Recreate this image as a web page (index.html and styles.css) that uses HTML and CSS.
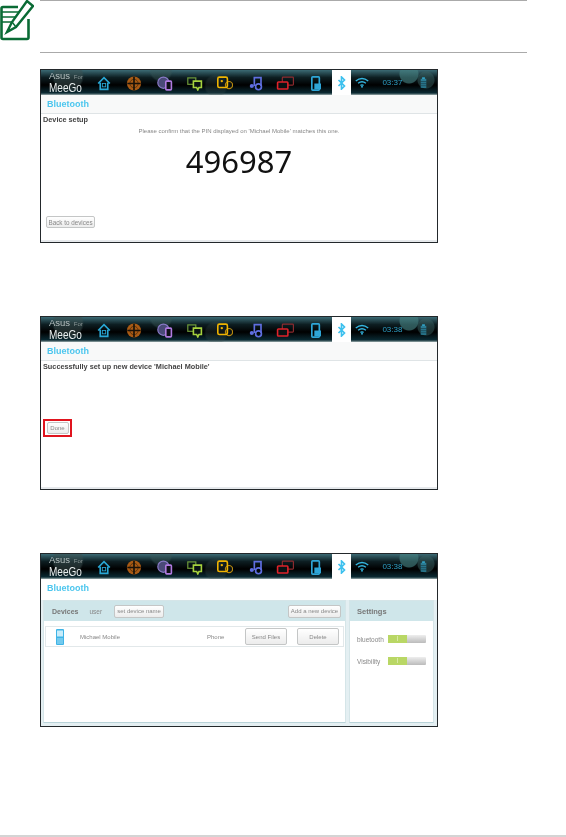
FILE: index.html
```html
<!DOCTYPE html>
<html lang="en">
<head>
    <meta charset="UTF-8">
    <meta name="viewport" content="width=device-width, initial-scale=1.0">
    <title>Bluetooth setup</title>
    <link rel="stylesheet" href="styles.css">
</head>
<body>

    <svg class="defs" width="0" height="0" aria-hidden="true">
        <symbol id="i-home" viewBox="0 0 16 18"><path d="M1 9 8 2l7 7M3.500 8v8h9V8" fill="none" stroke="currentColor" stroke-width="2"/><rect x="6" y="9" width="4" height="4" fill="none" stroke="currentColor"/></symbol>
        <symbol id="i-globe" viewBox="0 0 18 18"><circle cx="9" cy="9" r="8.500" fill="#a85a14"/><path d="M9 1v16M1 9h16" stroke="#1a1208" stroke-width="2"/><circle cx="9" cy="9" r="5" fill="none" stroke="#1a1208" stroke-width=".6"/></symbol>
        <symbol id="i-web" viewBox="0 0 20 18"><circle cx="8" cy="8" r="7" fill="#4a4a78" stroke="#8a7ac8" stroke-width="1.500"/><rect x="11" y="6" width="7" height="11" rx="1" fill="#101018" stroke="#b07ae0" stroke-width="2"/></symbol>
        <symbol id="i-chat" viewBox="0 0 20 18"><rect x="1" y="2" width="10" height="8" fill="none" stroke="#6e9a3a" stroke-width="1.500"/><path d="M8 6h10v8h-3l-1.500 3-1.500-3H8z" fill="#0a1214" stroke="#a6d23e" stroke-width="2"/></symbol>
        <symbol id="i-people" viewBox="0 0 20 18"><circle cx="15" cy="11" r="4.500" fill="#0a1214" stroke="#b88a10" stroke-width="1.500"/><rect x="1" y="1" width="12" height="13" rx="2" fill="none" stroke="#f0b400" stroke-width="2"/><circle cx="6" cy="6" r="1.500" fill="#f0b400"/></symbol>
        <symbol id="i-music" viewBox="0 0 18 18"><path d="M7 12V2h8v10" fill="none" stroke="#5f6ee0" stroke-width="2"/><circle cx="4" cy="12" r="2.500" fill="#5f6ee0"/><circle cx="12" cy="13" r="3.500" fill="none" stroke="#5f6ee0" stroke-width="2"/></symbol>
        <symbol id="i-windows" viewBox="0 0 24 18"><rect x="8" y="1" width="14" height="10" rx="1" fill="none" stroke="#8c2a2e" stroke-width="1.500"/><rect x="2" y="7" width="13" height="9" rx="1" fill="#0a1214" stroke="#e0222a" stroke-width="2"/></symbol>
        <symbol id="i-device" viewBox="0 0 16 18"><rect x="3" y="1" width="9" height="16" rx="1" fill="none" stroke="#2ea6d8" stroke-width="2"/><rect x="6" y="9" width="8" height="7" fill="#2ea6d8"/></symbol>
        <symbol id="i-bt" viewBox="0 0 12 18"><path d="M2 5l8 8-4 4V1l4 4-8 8" fill="none" stroke="currentColor" stroke-width="2.200"/></symbol>
        <symbol id="i-wifi" viewBox="0 0 18 14"><path d="M1 5c5-4 11-4 16 0M4 8c3-2.500 7-2.500 10 0M7 11c1-1 3-1 4 0" fill="none" stroke="currentColor" stroke-width="1.800"/><circle cx="9" cy="12.500" r="1.200" fill="currentColor"/></symbol>
        <symbol id="i-batt" viewBox="0 0 10 16"><rect x="3" y="0" width="4" height="2" fill="currentColor"/><rect x="1" y="2" width="8" height="13" fill="currentColor" opacity=".55"/><path d="M1 6h8M1 9h8M1 12h8" stroke="#0a1214" stroke-width=".6"/></symbol>
    </svg>

    <div class="note">
        <svg class="note-icon" viewBox="0 0 34 42">
            <path d="M18 7H3a1.500 1.500 0 0 0-1.500 1.500v29A1.500 1.500 0 0 0 3 39h24a1.500 1.500 0 0 0 1.500-1.500V19" fill="none" stroke="#0a6b35" stroke-width="2.600"/>
            <path d="M2 12h17M2 17h14M2 22h12" stroke="#0a6b35" stroke-width="1.500"/>
            <path d="M27 1 12 22l-5 10 9-5L33 6z" fill="#fff" stroke="#0a6b35" stroke-width="2.400"/>
            <path d="M12 22l4 5" stroke="#0a6b35" stroke-width="1.500"/>
        </svg>
        <div class="note-body"></div>
    </div>

    <section class="shot shot-first">
        <div class="topbar">
            <div class="logo"><span class="logo-asus">Asus <small>For</small></span><span class="logo-meego">MeeGo</span></div>
            <div class="tabs">
                <svg class="icon ic-home"><use href="#i-home"/></svg>
                <svg class="icon"><use href="#i-globe"/></svg>
                <svg class="icon"><use href="#i-web"/></svg>
                <svg class="icon"><use href="#i-chat"/></svg>
                <svg class="icon"><use href="#i-people"/></svg>
                <svg class="icon"><use href="#i-music"/></svg>
                <svg class="icon icon-wide"><use href="#i-windows"/></svg>
                <svg class="icon"><use href="#i-device"/></svg>
            </div>
            <div class="tab-active"><svg class="icon-bt"><use href="#i-bt"/></svg></div>
            <svg class="icon-wifi"><use href="#i-wifi"/></svg>
            <span class="clock">03:37</span>
            <svg class="icon-batt"><use href="#i-batt"/></svg>
        </div>
        <div class="titlebar">Bluetooth</div>
        <div class="content">
            <h2 class="heading">Device setup</h2>
            <p class="confirm">Please confirm that the PIN displayed on 'Michael Mobile' matches this one.</p>
            <p class="pin">496987</p>
            <button class="btn btn-back">Back to devices</button>
        </div>
    </section>

    <section class="shot shot-second">
        <div class="topbar">
            <div class="logo"><span class="logo-asus">Asus <small>For</small></span><span class="logo-meego">MeeGo</span></div>
            <div class="tabs">
                <svg class="icon ic-home"><use href="#i-home"/></svg>
                <svg class="icon"><use href="#i-globe"/></svg>
                <svg class="icon"><use href="#i-web"/></svg>
                <svg class="icon"><use href="#i-chat"/></svg>
                <svg class="icon"><use href="#i-people"/></svg>
                <svg class="icon"><use href="#i-music"/></svg>
                <svg class="icon icon-wide"><use href="#i-windows"/></svg>
                <svg class="icon"><use href="#i-device"/></svg>
            </div>
            <div class="tab-active"><svg class="icon-bt"><use href="#i-bt"/></svg></div>
            <svg class="icon-wifi"><use href="#i-wifi"/></svg>
            <span class="clock">03:38</span>
            <svg class="icon-batt"><use href="#i-batt"/></svg>
        </div>
        <div class="titlebar">Bluetooth</div>
        <div class="content">
            <h2 class="heading">Successfully set up new device 'Michael Mobile'</h2>
            <div class="highlight"><button class="btn btn-done">Done</button></div>
        </div>
    </section>

    <section class="shot shot-third">
        <div class="topbar">
            <div class="logo"><span class="logo-asus">Asus <small>For</small></span><span class="logo-meego">MeeGo</span></div>
            <div class="tabs">
                <svg class="icon ic-home"><use href="#i-home"/></svg>
                <svg class="icon"><use href="#i-globe"/></svg>
                <svg class="icon"><use href="#i-web"/></svg>
                <svg class="icon"><use href="#i-chat"/></svg>
                <svg class="icon"><use href="#i-people"/></svg>
                <svg class="icon"><use href="#i-music"/></svg>
                <svg class="icon icon-wide"><use href="#i-windows"/></svg>
                <svg class="icon"><use href="#i-device"/></svg>
            </div>
            <div class="tab-active"><svg class="icon-bt"><use href="#i-bt"/></svg></div>
            <svg class="icon-wifi"><use href="#i-wifi"/></svg>
            <span class="clock">03:38</span>
            <svg class="icon-batt"><use href="#i-batt"/></svg>
        </div>
        <div class="titlebar titlebar-plain">Bluetooth</div>
        <div class="panels">
            <div class="panel panel-devices">
                <div class="panel-head">
                    <strong>Devices</strong>
                    <span class="user">user</span>
                    <button class="btn btn-name">set device name</button>
                    <button class="btn btn-add">Add a new device</button>
                </div>
                <div class="device">
                    <svg class="phone" viewBox="0 0 8 16">
                        <rect width="8" height="16" rx="1" fill="#3fb4e6"/>
                        <rect x="1" y="1.500" width="6" height="6" fill="#c8ecfa"/>
                        <path d="M1 10h6M1 12h6M1 14h6" stroke="#a8e0f6"/>
                    </svg>
                    <span class="device-name">Michael Mobile</span>
                    <span class="device-type">Phone</span>
                    <button class="btn btn-row">Send Files</button>
                    <button class="btn btn-row">Delete</button>
                </div>
            </div>
            <div class="panel panel-settings">
                <div class="panel-head"><strong>Settings</strong></div>
                <div class="setting">
                    <span>bluetooth</span>
                    <div class="toggle"><span class="toggle-on">I</span></div>
                </div>
                <div class="setting">
                    <span>Visibility</span>
                    <div class="toggle"><span class="toggle-on">I</span></div>
                </div>
            </div>
        </div>
    </section>

    <div class="page-foot"></div>

</body>
</html>
```

FILE: styles.css
```css
body {
    margin: 0;
    width: 566px;
    height: 837px;
    position: relative;
    overflow: hidden;
    background-color: #fff;
    font-family: "Liberation Sans", Arial, sans-serif;
    color: #555;
}

.defs {
    position: absolute;
}

/* Note block */
.note {
    display: flex;
    height: 53px;
}

.note-icon {
    width: 34px;
    height: 42px;
    margin-right: 6px;
    flex: none;
}

.note-body {
    width: 487px;
    border-top: 1px solid #aaa;
    border-bottom: 1px solid #aaa;
}

/* Screenshots */
.shot {
    width: 398px;
    height: 174px;
    box-sizing: border-box;
    margin-left: 40px;
    border: 1px solid #23282b;
    display: flex;
    flex-direction: column;
    background-color: #fff;
    filter: blur(0.35px);
}

.shot-first {
    margin-top: 16px;
}

.shot-second {
    margin-top: 73px;
}

.shot-third {
    margin-top: 63px;
    background-color: #e4eff2;
}

.topbar {
    height: 25px;
    flex: none;
    display: flex;
    align-items: center;
    color: #35b6e0;
    background:
        radial-gradient(circle at 368px 4px, rgba(70, 130, 130, 0.6) 9px, transparent 10px),
        radial-gradient(circle at 385px 10px, rgba(60, 100, 100, 0.45) 8px, transparent 9px),
        radial-gradient(circle at 27px 6px, rgba(60, 80, 80, 0.5) 14px, transparent 16px),
        radial-gradient(circle at 120px 0, rgba(60, 90, 90, 0.4) 10px, transparent 12px),
        radial-gradient(circle at 175px 16px, rgba(60, 80, 80, 0.25) 10px, transparent 12px),
        linear-gradient(#3b6a74, #0d1e22 30%, #000 60%, #0a2a33 92%, #9aa 100%);
}

.logo {
    width: 52px;
    margin: -2px 0 0 8px;
    flex: none;
    display: flex;
    flex-direction: column;
    color: #e8eeee;
    line-height: 10px;
}

.logo-asus {
    font-size: 9.500px;
    color: #b4bebe;
}

.logo-asus small {
    font-size: 6px;
    margin-left: 1px;
    color: #8a9696;
}

.logo-meego {
    font-size: 13px;
    line-height: 11px;
    transform: scaleX(0.77);
    transform-origin: left;
}

.tabs {
    display: grid;
    grid-template-columns: repeat(8, 30.300px);
    justify-items: center;
    align-items: center;
    margin: 1px 0 0 -12px;
}

.icon {
    width: 16px;
    height: 15px;
}

.icon-wide {
    width: 19px;
}

.ic-home {
    color: #29a8d6;
}

.tab-active {
    width: 19px;
    height: 25px;
    margin-left: 1px;
    display: flex;
    align-items: center;
    justify-content: center;
    background-color: #fff;
    color: #3cc0ee;
}

.icon-bt {
    width: 9px;
    height: 14px;
}

.icon-wifi {
    width: 14px;
    height: 11px;
    margin-left: 4px;
}

.clock {
    width: 24px;
    margin-left: 13px;
    font-size: 8px;
    color: #2e9fc5;
}

.icon-batt {
    width: 7px;
    height: 12px;
    margin-left: 14px;
}

.titlebar {
    height: 19px;
    flex: none;
    padding-left: 6px;
    line-height: 18px;
    font-size: 9px;
    font-weight: bold;
    color: #4cc6ee;
    background-color: #f8f9f9;
    border-bottom: 1px solid #dfe4e6;
    box-sizing: border-box;
}

.titlebar-plain {
    background-color: #fff;
    border-bottom: none;
    height: 21px;
}

.content {
    flex: 1;
    padding: 0 2px;
    border-bottom: 2px solid #e6e9ec;
    display: flex;
    flex-direction: column;
}

.heading {
    margin: 0;
    font-size: 7.300px;
    line-height: 12px;
    color: #444;
}

.confirm {
    margin: 0;
    text-align: center;
    font-size: 6px;
    line-height: 10px;
    color: #888;
}

.pin {
    margin: 5px 0 0;
    text-align: center;
    font-family: "Noto Sans", sans-serif;
    font-size: 31px;
    line-height: 40px;
    color: #111;
}

.btn {
    padding: 0;
    border: 1px solid #c4c6c6;
    border-radius: 2px;
    background: linear-gradient(#fff, #ececec);
    color: #888;
    font-family: "Liberation Sans", Arial, sans-serif;
    font-size: 6px;
    flex: none;
}

.btn-back {
    width: 49px;
    height: 12px;
    margin: 35px 0 0 3px;
    font-size: 6.300px;
}

.highlight {
    width: 25px;
    height: 14px;
    margin-top: 46px;
    display: flex;
    align-items: center;
    justify-content: center;
    border: 2px solid #e0141e;
}

.btn-done {
    width: 22px;
    height: 12px;
}

/* Device panels */
.panels {
    flex: 1;
    display: flex;
    gap: 3px;
    padding: 0 3px 3px 2px;
    min-height: 0;
}

.panel {
    background-color: #fff;
    border: 1px solid #d5e5e8;
    border-bottom-color: #b8d2d8;
    display: flex;
    flex-direction: column;
    box-sizing: border-box;
}

.panel-devices {
    width: 303px;
}

.panel-settings {
    width: 85px;
}

.panel-head {
    height: 20px;
    flex: none;
    display: flex;
    align-items: center;
    padding: 0 4px 0 8px;
    background-color: #cfe6ea;
    font-size: 7px;
    color: #777;
}

.panel-settings .panel-head {
    padding-left: 7px;
}

.panel-head strong {
    font-size: 7px;
}

.panel-settings .panel-head strong {
    font-size: 7.500px;
}

.user {
    margin-left: 11px;
    font-size: 6.500px;
    color: #888;
}

.btn-name {
    width: 50px;
    height: 13px;
    margin-left: 12px;
}

.btn-add {
    width: 53px;
    height: 13px;
    margin-left: auto;
}

.device {
    height: 21px;
    margin: 5px 1px 0;
    display: flex;
    align-items: center;
    border: 1px solid #e2e8ea;
    font-size: 6px;
    color: #888;
    box-sizing: border-box;
}

.phone {
    width: 8px;
    height: 16px;
    margin-left: 10px;
    flex: none;
}

.device-name {
    width: 127px;
    margin-left: 16px;
    flex: none;
}

.device-type {
    width: 38px;
    flex: none;
}

.btn-row {
    width: 42px;
    height: 17px;
}

.btn-row + .btn-row {
    margin-left: 10px;
}

.setting {
    display: flex;
    align-items: center;
    justify-content: space-between;
    padding: 0 7px;
    margin-top: 14px;
    font-size: 6.500px;
    color: #888;
}

.toggle {
    width: 38px;
    height: 8px;
    border-radius: 1px;
    background: linear-gradient(#eee, #bbb);
    display: flex;
}

.toggle-on {
    width: 19px;
    text-align: center;
    background-color: #b9d765;
    color: #e8f2c8;
    line-height: 8px;
}

.page-foot {
    position: absolute;
    left: 0;
    right: 0;
    bottom: 0;
    height: 2px;
    background-color: #d4d4d4;
}
```
